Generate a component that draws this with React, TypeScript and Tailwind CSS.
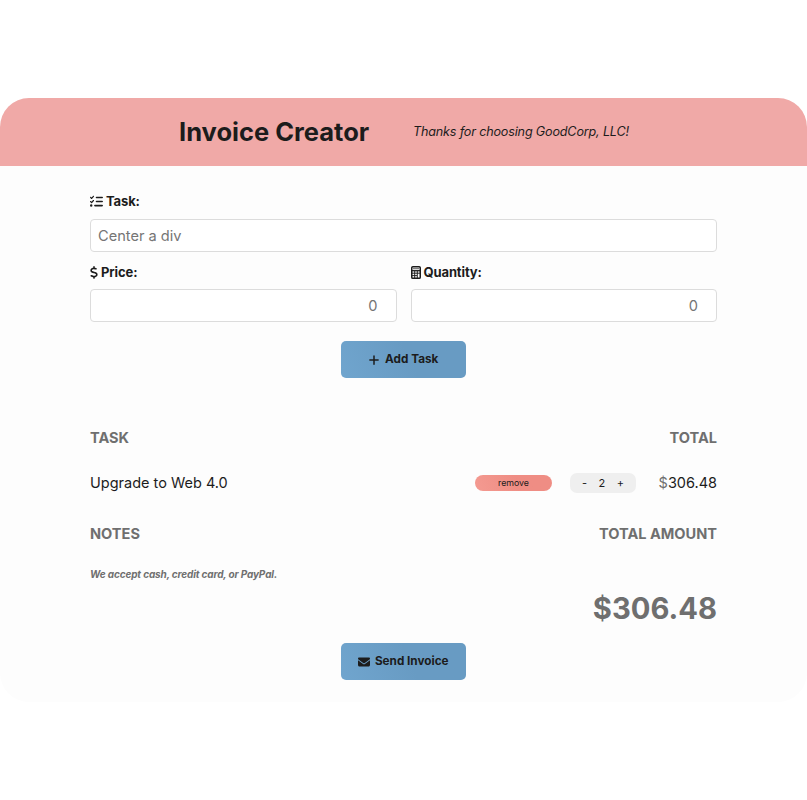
import React from "react";
import { FaListCheck, FaDollarSign, FaPlus, FaEnvelope } from "react-icons/fa6";

const label = "flex h-[18px] items-center text-[13px] font-bold leading-[18px] tracking-[-0.12px] text-[#1c1c1c]";
const input =
  "block h-[33px] w-full rounded-[4px] border border-[#dcdcdc] bg-white text-[14.6px] text-[#1c1c1c] outline-none placeholder:text-[#757575]";
const button =
  "mx-auto flex h-[37px] w-[125.5px] items-center justify-center rounded-[5px] bg-linear-65 from-[#70a5ce] via-[#689bc3] via-55% to-[#689bc3] text-[11.75px] font-bold text-[#1c1c1c]";
const heading = "text-[14.55px] font-bold leading-[20px] text-[#6f6f6f]";

function CalculatorIcon() {
  return (
    <svg viewBox="0 0 10 13" className="mr-[3px] h-[13px] w-[10px] shrink-0" fill="none" stroke="currentColor">
      <rect x="0.75" y="0.75" width="8.5" height="11.5" rx="1.1" strokeWidth="1.5" />
      <path d="M2 2.7h6" strokeWidth="0.7" />
      <path d="M1 4.7h8" strokeWidth="1.3" />
      <path d="M1 7.2h8M1 9.6h5M3.7 5v7M6.3 5v7" strokeWidth="0.95" />
    </svg>
  );
}

export default function App() {
  return (
    <div className="h-[800px] w-[807px] bg-white pt-[98px] font-['Inter',sans-serif]">
      <main className="h-[604px] overflow-hidden rounded-[29px] bg-[#fdfdfd]">
        <header className="flex h-[68px] items-center bg-[#f0a9a7] pl-[179px] text-[#1c1c1c]">
          <h1 className="w-[234px] whitespace-nowrap text-[25.5px] font-bold">Invoice Creator</h1>
          <p className="whitespace-nowrap text-[12.6px] italic tracking-[-0.17px]">Thanks for choosing GoodCorp, LLC!</p>
        </header>
        <div className="px-[90px] pt-[26px]">
          <form>
            <label className={label}>
              <FaListCheck className="mr-[3px] size-[13px]" />
              Task:
            </label>
            <input className={`${input} mt-[9px] px-[7px]`} placeholder="Center a div" />
            <div className="mt-[11px] grid grid-cols-2 gap-[14px]">
              <div>
                <label className={label}>
                  <FaDollarSign className="mr-[3px] h-[13px] w-[8px]" />
                  Price:
                </label>
                <input className={`${input} mt-[8px] pr-[18px] text-right`} placeholder="0" />
              </div>
              <div>
                <label className={label}>
                  <CalculatorIcon />
                  Quantity:
                </label>
                <input className={`${input} mt-[8px] pr-[18px] text-right`} placeholder="0" />
              </div>
            </div>
            <div className="pr-[0.5px]">
              <button type="button" className={`${button} mt-[19px]`}>
                <FaPlus className="mr-[5px] size-[12px]" />
                Add Task
              </button>
            </div>
          </form>
          <div className="mt-[50px] flex justify-between">
            <h2 className={heading}>TASK</h2>
            <h2 className={heading}>TOTAL</h2>
          </div>
          <div className="mt-[25px] flex h-[20px] items-center text-[14.5px] text-[#1c1c1c]">
            <span>Upgrade to Web 4.0</span>
            <button className="ml-auto h-[16px] w-[77px] rounded-full bg-linear-65 from-[#f49a91] via-[#ef8d84] via-55% to-[#ef8d84] text-[8.8px]">
              remove
            </button>
            <div className="ml-[18px] flex h-[20px] w-[66px] items-center justify-between rounded-[7px] bg-[#efefef] px-[12px] text-[11px]">
              <span>-</span>
              <span>2</span>
              <span>+</span>
            </div>
            <span className="w-[81px] text-right">
              <span className="text-[#6f6f6f]">$</span>306.48
            </span>
          </div>
          <div className="mt-[31px] flex justify-between">
            <h2 className={heading}>NOTES</h2>
            <h2 className={heading}>TOTAL AMOUNT</h2>
          </div>
          <p className="mt-[22px] text-[10px] font-bold italic leading-[16px] tracking-[-0.13px] text-[#6f6f6f]">
            We accept cash, credit card, or PayPal.
          </p>
          <p className="mt-[7px] text-right text-[29.2px] font-bold leading-[40px] text-[#6f6f6f]">$306.48</p>
          <div className="pr-[0.5px]">
            <button className={`${button} mt-[14px]`}>
              <FaEnvelope className="mr-[5px] size-[12px]" />
              Send Invoice
            </button>
          </div>
        </div>
      </main>
    </div>
  );
}
